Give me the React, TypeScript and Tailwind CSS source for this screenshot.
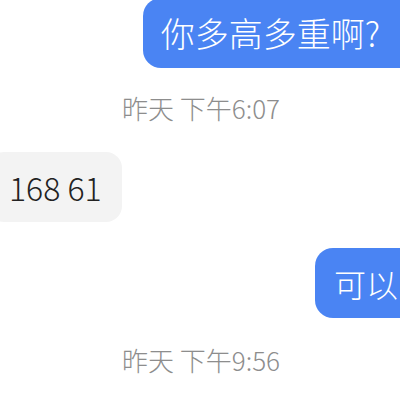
export default function App() {
  return (
    <div
      className="w-[400px] h-[400px] overflow-hidden bg-white flex flex-col font-light"
      style={{ fontFamily: '"Noto Sans CJK SC", "Noto Sans", sans-serif' }}
    >
      {/* outgoing */}
      <div className="flex justify-end -mt-[2px] -mr-[24px]">
        <div className="h-[70px] flex items-center pl-[18px] pr-[44px] rounded-[18px] bg-[#4a84f3] text-white text-[34px] leading-none">
          你多高多重啊?
        </div>
      </div>

      {/* time */}
      <div className="h-[40px] mt-[20px] flex items-center pl-[122px] text-[26px] leading-none text-[#8d8d8d]">
        昨天 下午6:07
      </div>

      {/* incoming */}
      <div className="flex mt-[24px] -ml-[12px]">
        <div className="h-[70px] flex items-center pl-[21px] pr-[20px] rounded-[16px] bg-[#f3f3f3] text-[#222] text-[32px] leading-none">
          168 61
        </div>
      </div>

      {/* outgoing */}
      <div className="flex justify-end mt-[26px] -mr-[42px]">
        <div className="h-[70px] flex items-center pl-[19px] pr-[44px] rounded-[18px] bg-[#4a84f3] text-white text-[32px] leading-none">
          可以
        </div>
      </div>

      {/* time */}
      <div className="h-[40px] mt-[22px] flex items-center pl-[122px] text-[26px] leading-none text-[#8d8d8d]">
        昨天 下午9:56
      </div>
    </div>
  );
}
